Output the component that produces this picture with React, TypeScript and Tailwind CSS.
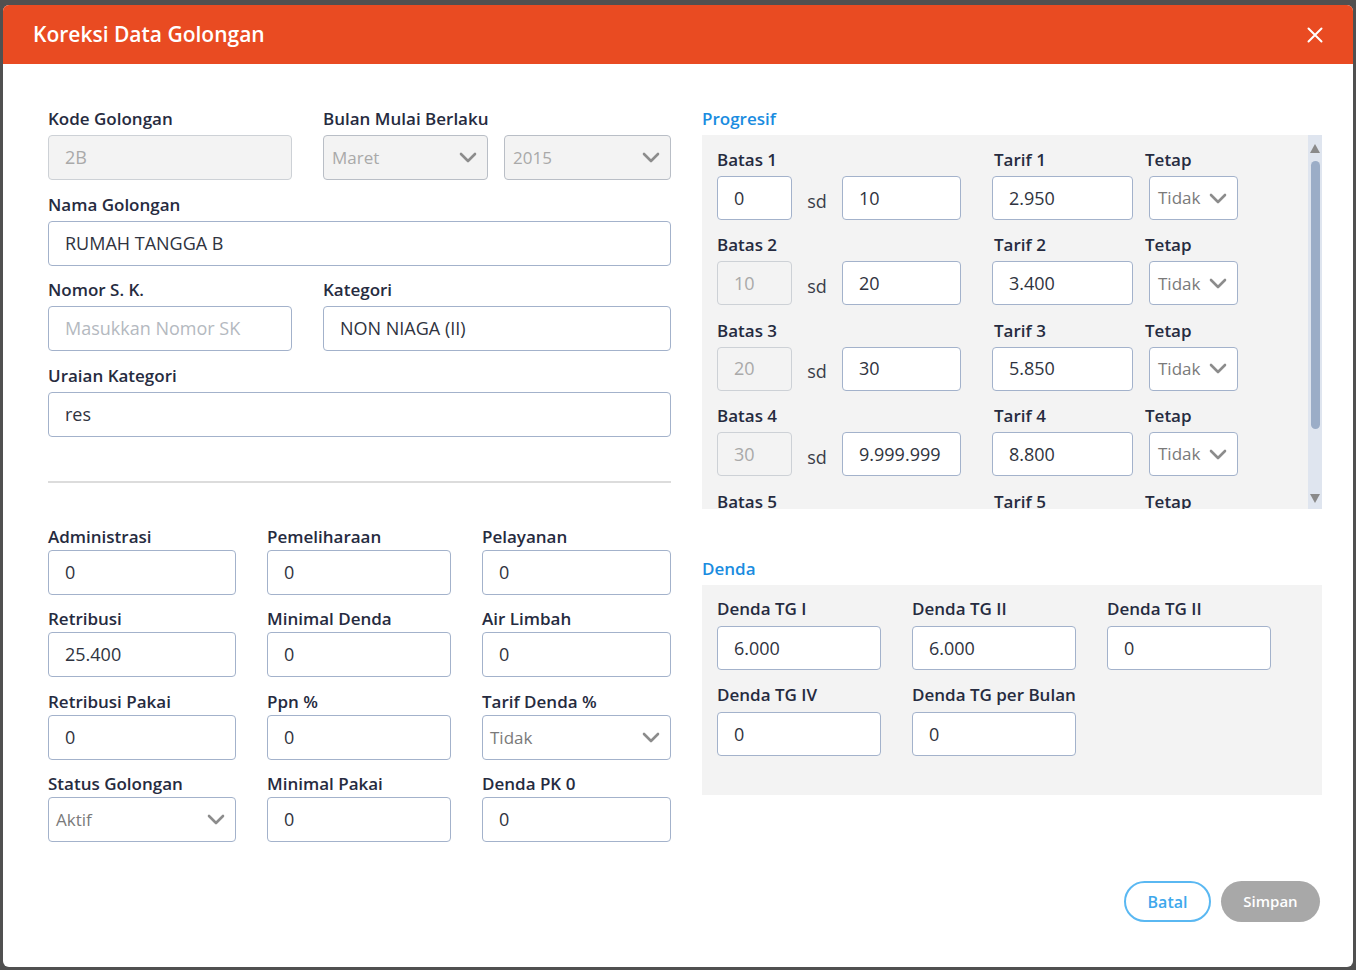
import { ReactNode } from "react";

const font = { fontFamily: '"Open Sans", "Noto Sans", sans-serif' };

function Chevron() {
    return (
        <svg width="18" height="11" viewBox="0 0 18 11" className="shrink-0">
            <polyline points="2,2 9,9 16,2" fill="none" stroke="#8c8c8c" strokeWidth="2.6" strokeLinecap="round" strokeLinejoin="round" />
        </svg>
    );
}

function Label({ children, className = "", blue }: { children: ReactNode; className?: string; blue?: boolean }) {
    const color = blue ? "text-[#1a8ce0]" : "text-[#262b40]";
    return <div className={"h-6 leading-6 text-[17px] font-semibold whitespace-nowrap " + color + " " + className}>{children}</div>;
}

function Input({ value, disabled, placeholder, short, className = "" }: { value?: string; disabled?: boolean; placeholder?: string; short?: boolean; className?: string }) {
    const base = disabled
        ? "bg-[#f3f3f3] border-[#cdd1d6] text-[#a9a9a9]"
        : "bg-white border-[#a3b2cb] text-[#2f3340]";
    const h = short ? "h-[44px]" : "h-[45px]";
    return (
        <div className={h + " flex items-center pl-4 pr-3 border rounded text-[18px] " + base + " " + className}>
            {value ? value : <span className="text-[#b4b9c0]">{placeholder}</span>}
        </div>
    );
}

function Select({ value, disabled, short, className = "" }: { value: string; disabled?: boolean; short?: boolean; className?: string }) {
    const base = disabled ? "bg-[#f3f3f3] border-[#b9bec6] text-[#a9a9a9]" : "bg-white border-[#a3b2cb] text-[#7a7a7a]";
    const h = short ? "h-[44px]" : "h-[45px]";
    return (
        <div className={h + " flex items-center justify-between pl-2 pr-2.5 border rounded text-[17px] " + base + " " + className}>
            <span>{value}</span>
            <Chevron />
        </div>
    );
}

function Field({ label, children, className = "" }: { label: string; children: ReactNode; className?: string }) {
    return (
        <div className={className}>
            <Label className="mb-1">{label}</Label>
            {children}
        </div>
    );
}

const biaya = [
    ["Administrasi", "0", "Pemeliharaan", "0", "Pelayanan", "0"],
    ["Retribusi", "25.400", "Minimal Denda", "0", "Air Limbah", "0"],
    ["Retribusi Pakai", "0", "Ppn %", "0", "Tarif Denda %", "select:Tidak"],
    ["Status Golongan", "select:Aktif", "Minimal Pakai", "0", "Denda PK 0", "0"],
];

const progresif = [
    { batasA: "0", batasAOn: true, batasB: "10", tarif: "2.950" },
    { batasA: "10", batasAOn: false, batasB: "20", tarif: "3.400" },
    { batasA: "20", batasAOn: false, batasB: "30", tarif: "5.850" },
    { batasA: "30", batasAOn: false, batasB: "9.999.999", tarif: "8.800" },
    { batasA: "", batasAOn: false, batasB: "", tarif: "" },
];

function BiayaCell({ label, value }: { label: string; value: string }) {
    return (
        <div>
            <Label className="mb-px">{label}</Label>
            {value.startsWith("select:") ? <Select value={value.slice(7)} className="pl-[7px]" /> : <Input value={value} />}
        </div>
    );
}

function DendaField({ label, value }: { label: string; value: string }) {
    return (
        <div className="w-[164px]">
            <Label className="mb-[5px]">{label}</Label>
            <Input value={value} short />
        </div>
    );
}

export default function App() {
    return (
        <div className="w-[1356px] h-[970px] bg-[#505050] pt-[5px] pl-[3px] overflow-hidden" style={font}>
            <div className="w-[1350px] h-[962px] bg-white rounded-md overflow-hidden flex flex-col">
                <div className="h-[59px] shrink-0 bg-[#e94b22] flex items-center justify-between pl-[30px] pr-[30px]">
                    <div className="text-white text-[21px] font-semibold">Koreksi Data Golongan</div>
                    <svg width="16" height="16" viewBox="0 0 16 16">
                        <path d="M1.5 1.5 L14.5 14.5 M14.5 1.5 L1.5 14.5" stroke="white" strokeWidth="2" strokeLinecap="round" />
                    </svg>
                </div>

                <div className="flex gap-[31px] pl-[45px] pr-[31px] pt-[43px]">
                    {/* left column */}
                    <div className="w-[623px] shrink-0">
                        <div className="flex flex-col">
                            <div className="flex gap-[31px]">
                                <Field label="Kode Golongan" className="w-[244px]">
                                    <Input value="2B" disabled />
                                </Field>
                                <Field label="Bulan Mulai Berlaku" className="flex-1">
                                    <div className="flex gap-4">
                                        <Select value="Maret" disabled className="w-[165px]" />
                                        <Select value="2015" disabled className="flex-1" />
                                    </div>
                                </Field>
                            </div>
                            <Field label="Nama Golongan" className="mt-[13px]">
                                <Input value="RUMAH TANGGA B" />
                            </Field>
                            <div className="mt-[12px] flex gap-[31px]">
                                <Field label="Nomor S. K." className="w-[244px]">
                                    <Input placeholder="Masukkan Nomor SK" />
                                </Field>
                                <Field label="Kategori" className="flex-1">
                                    <Input value="NON NIAGA (II)" />
                                </Field>
                            </div>
                            <Field label="Uraian Kategori" className="mt-[13px]">
                                <Input value="res" />
                            </Field>
                        </div>

                        <div className="mt-[44px] border-t-2 border-[#dcdcdc]" />

                        <div className="mt-[42px] grid grid-cols-[188px_184px_189px] gap-x-[31px] gap-y-[12.4px]">
                            {biaya.map((r) => (
                                <>
                                    <BiayaCell key={r[0]} label={r[0]} value={r[1]} />
                                    <BiayaCell key={r[2]} label={r[2]} value={r[3]} />
                                    <BiayaCell key={r[4]} label={r[4]} value={r[5]} />
                                </>
                            ))}
                        </div>
                    </div>

                    {/* right column */}
                    <div className="w-[620px] shrink-0">
                        <Label blue className="mb-1">Progresif</Label>
                        <div className="h-[374px] bg-[#f3f3f3] flex">
                            <div className="flex-1 overflow-hidden pl-[15px] pt-[13px] flex flex-col gap-[13.4px]">
                                {progresif.map((p, i) => (
                                    <div key={i} className="flex">
                                        <div className="w-[244px]">
                                            <Label className="mb-1">Batas {i + 1}</Label>
                                            <div className="flex items-center">
                                                <Input value={p.batasA} disabled={!p.batasAOn} short className="w-[75px]" />
                                                <div className="w-[50px] text-center text-[18px] text-[#3a3d48] pt-1.5">sd</div>
                                                <Input value={p.batasB} short className="w-[119px]" />
                                            </div>
                                        </div>
                                        <div className="ml-[31px] w-[141px]">
                                            <Label className="mb-1 pl-0.5">Tarif {i + 1}</Label>
                                            <Input value={p.tarif} short />
                                        </div>
                                        <div className="ml-[16px] w-[89px]">
                                            <Label className="mb-1 -ml-1">Tetap</Label>
                                            <Select value="Tidak" short />
                                        </div>
                                    </div>
                                ))}
                            </div>
                            <div className="w-[14px] bg-[#dfe5ef] flex flex-col items-center pt-[9px] pb-[6px]">
                                <svg width="10" height="9" viewBox="0 0 10 9"><polygon points="5,0 10,9 0,9" fill="#8a8a8a" /></svg>
                                <div className="mt-[8px] w-[9px] h-[268px] rounded-full bg-[#9badc7]" />
                                <div className="flex-1" />
                                <svg width="10" height="9" viewBox="0 0 10 9"><polygon points="0,0 10,0 5,9" fill="#8a8a8a" /></svg>
                            </div>
                        </div>

                        <Label blue className="mt-[48px] mb-1">Denda</Label>
                        <div className="h-[210px] bg-[#f3f3f3] pl-[15px] pt-[12px] flex flex-col gap-[13px]">
                            <div className="flex gap-[31px]">
                                <DendaField label="Denda TG I" value="6.000" />
                                <DendaField label="Denda TG II" value="6.000" />
                                <DendaField label="Denda TG II" value="0" />
                            </div>
                            <div className="flex gap-[31px]">
                                <DendaField label="Denda TG IV" value="0" />
                                <DendaField label="Denda TG per Bulan" value="0" />
                            </div>
                        </div>

                        <div className="mt-[86px] flex justify-end gap-[10px] pr-[2px]">
                            <button className="w-[87px] h-[41px] rounded-full border-2 border-[#5ab8f2] text-[#3ea8ec] text-[16px] font-semibold bg-white">Batal</button>
                            <button className="w-[99px] h-[41px] rounded-full bg-[#a8a8a8] text-white text-[15px] font-semibold">Simpan</button>
                        </div>
                    </div>
                </div>
            </div>
        </div>
    );
}
